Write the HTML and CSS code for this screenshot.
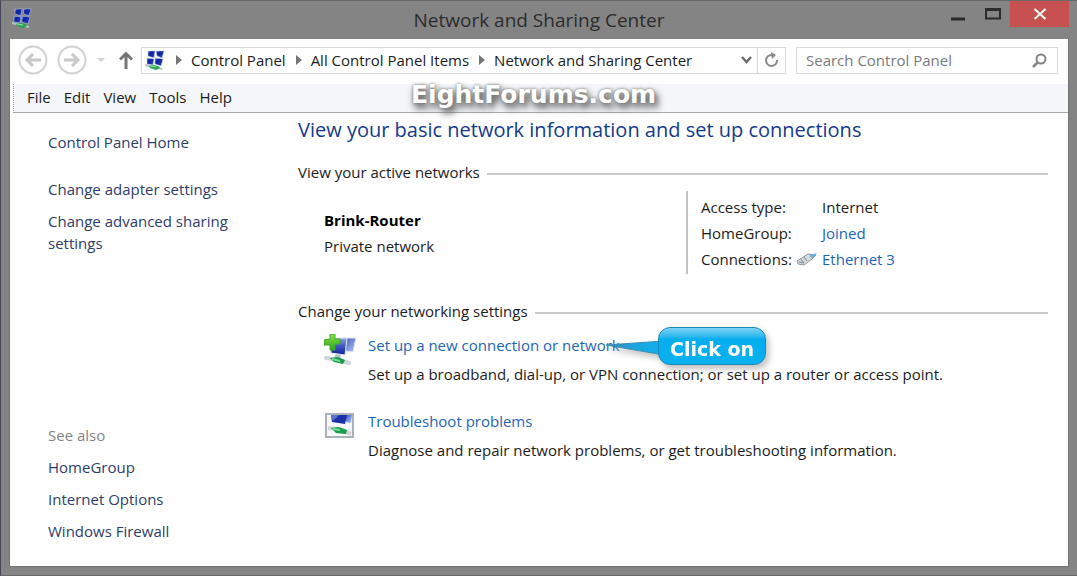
FILE: index.html
```html
<!DOCTYPE html>
<html lang="en">
<head>
<meta charset="utf-8">
<title>Network and Sharing Center</title>
<link rel="stylesheet" href="styles.css">
</head>
<body>
<svg class="defs" aria-hidden="true">
  <defs>
    <linearGradient id="screen" x1="0" y1="0" x2="1" y2="1">
      <stop offset="0" stop-color="#5f78d4"/><stop offset=".3" stop-color="#0d1f9e"/><stop offset=".7" stop-color="#1c34b0"/><stop offset="1" stop-color="#6f8be0"/>
    </linearGradient>
    <linearGradient id="front" x1="0" y1="0" x2="0" y2="1">
      <stop offset="0" stop-color="#8ea4e4"/><stop offset=".5" stop-color="#3a53c2"/><stop offset="1" stop-color="#101f9a"/>
    </linearGradient>
    <linearGradient id="back" x1="0" y1="0" x2="1" y2="1">
      <stop offset="0" stop-color="#3c57c4"/><stop offset="1" stop-color="#b9c8f2"/>
    </linearGradient>
    <linearGradient id="plus" x1="0" y1="0" x2="0" y2="1">
      <stop offset="0" stop-color="#8be04a"/><stop offset="1" stop-color="#2fa51c"/>
    </linearGradient>
    <linearGradient id="tail" x1="0" y1="0" x2="1" y2="0">
      <stop offset="0" stop-color="#3a7fae"/><stop offset=".5" stop-color="#1ba6df"/><stop offset="1" stop-color="#0fb0ee"/>
    </linearGradient>
    <symbol id="network" viewBox="0 0 20 20">
      <g fill="url(#screen)" stroke="#c3cdf0" stroke-width=".5">
        <path d="M3 1h7l-1 7-6-2z"/><path d="M11 1h8l-2 7-5-2z"/>
        <path d="M2 8l7 1-1 6-6-1z"/><path d="M10 8l8 1-2 7-6-2z"/>
      </g>
      <path d="M0 15l8 2 9 2" stroke="#b9c2c4" stroke-width="2" fill="none"/>
      <path d="M4 16l4-1 5 1 2 2-4 2-6-2z" fill="#27a650"/>
      <path d="M5 16l6 1" stroke="#8fe0a4"/>
    </symbol>
  </defs>
</svg>
<div class="window">
  <header class="titlebar">
    <svg class="app-icon"><use href="#network"/></svg>
    <h1 class="title">Network and Sharing Center</h1>
    <div class="controls">
      <button class="control" type="button" aria-label="Minimize"><svg width="14" height="4"><path d="M0 2h14" stroke="#2b2b2b" stroke-width="3"/></svg></button>
      <button class="control" type="button" aria-label="Maximize"><svg width="16" height="12"><path d="M1 1.500h14v9H1z" fill="none" stroke="#2b2b2b" stroke-width="2"/><path d="M0 1.500h16" stroke="#2b2b2b" stroke-width="3"/></svg></button>
      <button class="control close" type="button" aria-label="Close"><svg width="14" height="12"><path d="M1.500 1l11 10M12.500 1l-11 10" stroke="#fff" stroke-width="2"/></svg></button>
    </div>
  </header>
  <div class="client">
    <div class="toolbar">
      <button class="nav" type="button" aria-label="Back"><svg width="30" height="30"><circle cx="15" cy="15" r="13.500" fill="none" stroke="#d2d2d2" stroke-width="2"/><path d="M23 15H9M15 9l-6 6 6 6" fill="none" stroke="#c8c8c8" stroke-width="3"/></svg></button>
      <button class="nav forward" type="button" aria-label="Forward"><svg width="30" height="30"><circle cx="15" cy="15" r="13.500" fill="none" stroke="#d2d2d2" stroke-width="2"/><path d="M7 15h14M15 9l6 6-6 6" fill="none" stroke="#c8c8c8" stroke-width="3"/></svg></button>
      <button class="nav recent" type="button" aria-label="Recent locations"><svg width="8" height="4"><path d="M0 0h8L4 4z" fill="#d2d2d2"/></svg></button>
      <button class="nav" type="button" aria-label="Up"><svg width="14" height="18"><path d="M7 18V2M1 8.500l6-6 6 6" fill="none" stroke="#757575" stroke-width="3"/></svg></button>
      <nav class="address" aria-label="Address">
        <svg class="address-icon"><use href="#network"/></svg>
        <svg class="sep" viewBox="0 0 6 10"><path d="M0 0l6 5-6 5z" fill="#757575"/></svg>
        <a class="crumb" href="#">Control Panel</a>
        <svg class="sep" viewBox="0 0 6 10"><path d="M0 0l6 5-6 5z" fill="#757575"/></svg>
        <a class="crumb" href="#">All Control Panel Items</a>
        <svg class="sep" viewBox="0 0 6 10"><path d="M0 0l6 5-6 5z" fill="#757575"/></svg>
        <a class="crumb" href="#">Network and Sharing Center</a>
        <button class="drop" type="button" aria-label="Previous locations"><svg width="11" height="8"><path d="M1 1l4.500 5L10 1" fill="none" stroke="#6c6c6c" stroke-width="2.500"/></svg></button>
        <button class="refresh" type="button" aria-label="Refresh"><svg width="15" height="16"><path d="M8 3a5.500 5.500 0 1 0 5 5" fill="none" stroke="#8a8a8a" stroke-width="2"/><path d="M7 0l5 3-4 4z" fill="#8a8a8a"/></svg></button>
      </nav>
      <div class="search">
        <input class="search-input" type="text" aria-label="Search Control Panel" placeholder="Search Control Panel">
        <svg width="15" height="15"><circle cx="9" cy="6" r="4.500" fill="none" stroke="#858585" stroke-width="2"/><path d="M6 9l-5 5" stroke="#858585" stroke-width="2.500"/></svg>
      </div>
    </div>
    <div class="menubar">
      <button class="menu" type="button">File</button>
      <button class="menu" type="button">Edit</button>
      <button class="menu" type="button">View</button>
      <button class="menu" type="button">Tools</button>
      <button class="menu" type="button">Help</button>
      <span class="watermark">EightForums.com</span>
    </div>
    <div class="body">
      <aside class="sidebar">
        <a class="side-link home" href="#">Control Panel Home</a>
        <a class="side-link" href="#">Change adapter settings</a>
        <a class="side-link" href="#">Change advanced sharing settings</a>
        <div class="see-also">
          <span class="side-label">See also</span>
          <a class="side-link" href="#">HomeGroup</a>
          <a class="side-link" href="#">Internet Options</a>
          <a class="side-link" href="#">Windows Firewall</a>
        </div>
      </aside>
      <main class="main">
        <h2 class="heading">View your basic network information and set up connections</h2>
        <h3 class="section">View your active networks</h3>
        <div class="active">
          <div class="network">
            <strong>Brink-Router</strong>
            <span>Private network</span>
          </div>
          <dl class="facts">
            <dt>Access type:</dt><dd>Internet</dd>
            <dt>HomeGroup:</dt><dd><a class="link" href="#">Joined</a></dd>
            <dt>Connections:</dt>
            <dd class="with-icon"><svg width="22" height="16"><path d="M1 10l11-7 8 1-4 4-8 6-6-1z" fill="#d5dade" stroke="#8d979d"/><path d="M5 8l3 4M8 6l3 4M3 11l5 1" stroke="#7d878d" fill="none"/><path d="M14 4l7-2-4 5-3-1z" fill="#69aede"/></svg><a class="link" href="#">Ethernet 3</a></dd>
          </dl>
        </div>
        <h3 class="section">Change your networking settings</h3>
        <ul class="tasks">
          <li class="task">
            <svg class="task-icon" viewBox="0 0 32 32">
              <path d="M20 4l12 0-3 14-8-1z" fill="url(#back)" stroke="#dfe5f3"/>
              <path d="M6 4l17 0-2 17-14-2z" fill="url(#front)" stroke="#e4e9f6"/>
              <path d="M12 20l5 1-1 3-6-1z" fill="#b6c5cb"/>
              <path d="M2 24l12 2 11 3" stroke="#d0d6d8" stroke-width="4" stroke-linecap="round" fill="none"/>
              <path d="M6 24l8-1 7 3-2 4-9-2z" fill="#1a9b4e"/><path d="M8 25l8 2" stroke="#7bd89c" stroke-width="2"/>
              <path d="M6 0h5v5h5v5h-5v6H6v-5H0V6l6-1z" fill="url(#plus)" stroke="#3eab26"/>
            </svg>
            <div class="task-text">
              <a class="link" href="#">Set up a new connection or network</a>
              <p class="desc">Set up a broadband, dial-up, or VPN connection; or set up a router or access point.</p>
              <div class="callout">
                <svg class="callout-tail" viewBox="0 0 58 24"><path d="M0 9l58-4v14z" fill="url(#tail)" stroke="#3a8fb5"/></svg>
                <span class="callout-box">Click on</span>
              </div>
            </div>
          </li>
          <li class="task">
            <svg class="task-icon" viewBox="0 0 32 32">
              <path d="M2 4h27v23H2z" fill="#f6f8fa" stroke="#a9b1b9" stroke-width="2"/>
              <path d="M22 5h6l-1 8-5-1z" fill="url(#back)"/>
              <path d="M7 5h16l-2 9-13-2z" fill="#1a2fa8"/><path d="M7 5h8l-6 6z" fill="#5b73cd"/>
              <path d="M4 18l9 1 14 5" stroke="#d0d6d8" stroke-width="4" fill="none"/>
              <path d="M7 18l8-1 8 3-1 4-10-1z" fill="#1a9b4e"/><path d="M9 19l7 1" stroke="#7bd89c" stroke-width="2"/>
            </svg>
            <div class="task-text">
              <a class="link" href="#">Troubleshoot problems</a>
              <p class="desc">Diagnose and repair network problems, or get troubleshooting information.</p>
            </div>
          </li>
        </ul>
      </main>
    </div>
  </div>
</div>
</body>
</html>
```
FILE: styles.css
```css
* { box-sizing: border-box; }
body {
  margin: 0;
  font: 15px/22px "Open Sans", "Noto Sans", sans-serif;
  color: #1c1c1c;
}
a { color: inherit; text-decoration: none; }
button { font: inherit; color: inherit; background: none; border: 0; padding: 0; display: flex; align-items: center; justify-content: center; }
svg { display: block; flex: none; }
.defs { position: absolute; width: 0; height: 0; }

.window {
  min-height: 100vh;
  display: flex;
  flex-direction: column;
  padding: 0 8px 8px;
  background: #848484;
  border: 1px solid #6a676b;
  border-left: 1px solid #47455a;
  border-right: 0;
}
.titlebar { height: 38px; display: flex; align-items: flex-start; }
.app-icon { width: 20px; height: 20px; margin: 7px 0 0 3px; }
.title { flex: 1; margin: 6px 0 0 106px; font-size: 19px; line-height: 26px; font-weight: 400; text-align: center; color: #2c2c2c; }
.controls { display: flex; }
.control { width: 35px; height: 26px; }
.control:first-child { align-items: flex-end; padding-bottom: 6px; }
.close { width: 59px; background: #c75050; }

.client { flex: 1; display: flex; flex-direction: column; background: #fff; border: 1px solid #747474; border-width: 0 1px 1px; }
.toolbar { height: 45px; display: flex; align-items: center; padding: 0 10px 3px 8px; }
.forward { margin-left: 9px; }
.recent { margin: 0 14px 0 10px; }
.address { flex: 1; height: 27px; margin: 0 10px 0 8px; display: flex; align-items: center; border: 1px solid #d9d9d9; white-space: nowrap; }
.address-icon { width: 20px; height: 20px; margin: 0 11px 0 3px; }
.sep { width: 6px; height: 10px; }
.crumb { margin: 0 10px 0 9px; }
.drop { margin-left: auto; padding-right: 5px; height: 25px; }
.refresh { width: 28px; height: 25px; border-left: 1px solid #d9d9d9; }
.search { width: 262px; height: 27px; display: flex; align-items: center; padding-right: 10px; border: 1px solid #d9d9d9; }
.search-input { flex: 1; min-width: 0; border: 0; padding: 0 0 0 9px; font: inherit; background: none; outline: 0; }
.search-input::placeholder { color: #7b7b7b; opacity: 1; }

.menubar { position: relative; height: 29px; display: flex; align-items: center; gap: 13px; padding: 0 0 2px 13px; margin-left: 3px; background: #f4f6f9; border-bottom: 1px solid #a9a9a9; border-left: 1px dotted #a0a0a0; }
.watermark {
  position: absolute; left: 397px; top: -4px;
  font: 700 25px/30px "DejaVu Sans", sans-serif; color: #fff;
  text-shadow: 0 0 3px #777, 3px 4px 6px #666, 2px 5px 10px #888;
}

.body { flex: 1; display: flex; }
.sidebar { width: 288px; display: flex; flex-direction: column; gap: 10px; padding: 18px 60px 24px 38px; color: #2f3d68; }
.home { margin-bottom: 15px; }
.see-also { margin-top: auto; display: flex; flex-direction: column; gap: 10px; }
.side-label { color: #858585; }
.main { flex: 1; padding: 3px 20px 0 0; }
.heading { margin: 0; font-size: 20px; line-height: 28px; font-weight: 400; color: #143a8c; }
.section { display: flex; align-items: center; gap: 7px; margin: 17px 0 0; font-size: 15px; line-height: 22px; font-weight: 400; }
.section::after { content: ""; flex: 1; height: 2px; margin-top: 4px; background: #cacaca; }
.active { display: flex; margin: 8px 0 26px; padding-left: 26px; }
.network { width: 362px; display: flex; flex-direction: column; gap: 4px; padding-top: 18px; }
.network strong { color: #000; }
.facts { margin: 0; display: grid; grid-template-columns: 121px auto; align-content: center; row-gap: 4px; height: 83px; padding-left: 13px; border-left: 2px solid #c4c4c4; }
.facts dd { margin: 0; }
.with-icon { display: flex; align-items: center; gap: 4px; }
.facts .with-icon { margin-left: -26px; }
.link { color: #1c66b8; }
.tasks { list-style: none; margin: 12px 0 0; padding: 0 0 0 26px; display: grid; gap: 25px; }
.task { display: flex; gap: 12px; }
.task-icon { width: 32px; height: 32px; }
.task-text { position: relative; display: grid; gap: 7px; }
.desc { margin: 0; }
.callout { position: absolute; left: 238px; top: -7px; display: flex; align-items: flex-start; filter: drop-shadow(3px 4px 3px #8888); }
.callout-tail { width: 58px; height: 24px; margin: 9px -6px 0 0; }
.callout-box {
  height: 38px; padding: 3px 11px 0; border: 1px solid #1889b5; border-radius: 12px;
  font: 700 19px/36px "DejaVu Sans", sans-serif; color: #fff; white-space: nowrap;
  background: linear-gradient(#7ed4f6, #25b5ee 26%, #05aeef 30%, #0ab1f0);
}
```
